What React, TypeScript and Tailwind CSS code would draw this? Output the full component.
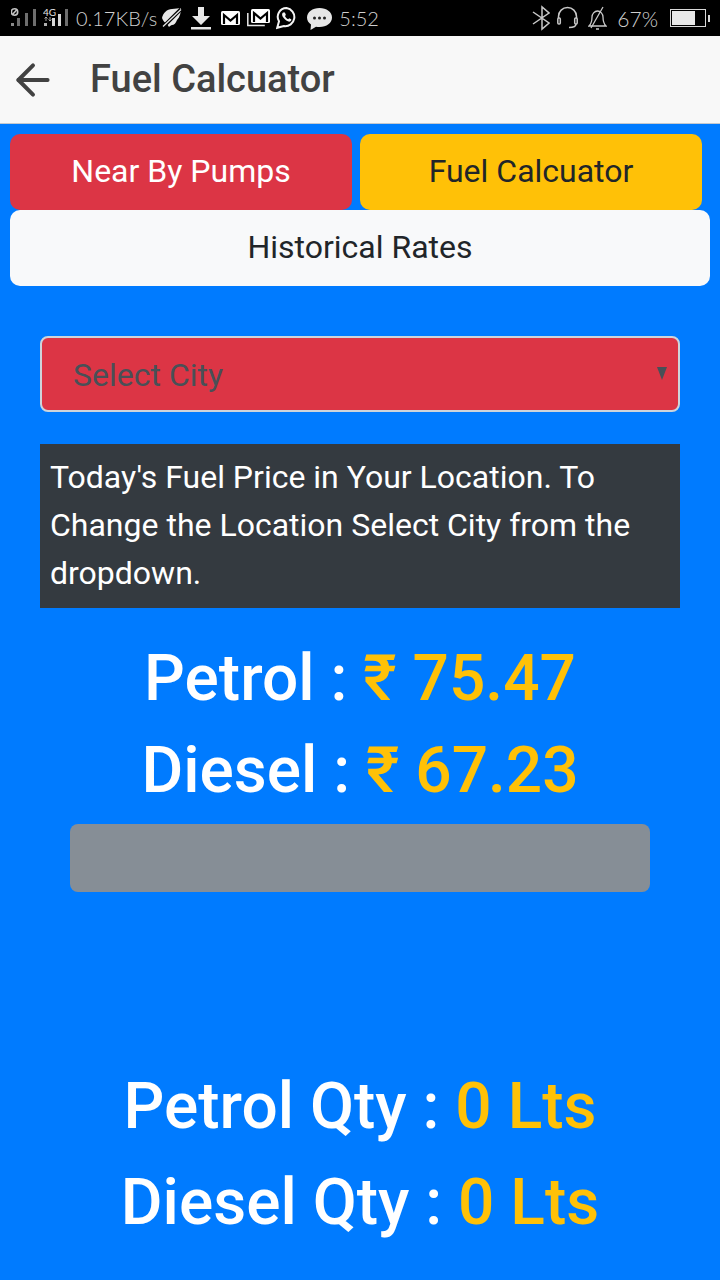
import { ArrowLeft } from "lucide-react";

// status bar icons use the bar's own y coordinates, so every svg is 36px tall
function SignalOff() {
  return (
    <svg width="25" height="36" viewBox="0 0 25 36" fill="none" className="ml-[11px]">
      <circle cx="3.500" cy="12" r="3.200" stroke="#c4c4c4" strokeWidth="1.600" />
      <path d="M1.500 14.500l4.500-5" stroke="#c4c4c4" strokeWidth="1.600" />
      <rect x="0" y="23" width="3" height="3" fill="#8a8a8a" />
      <rect x="6" y="18" width="3" height="8" fill="#6e6e6e" />
      <rect x="14" y="13" width="3" height="13" fill="#6e6e6e" />
      <rect x="22" y="9" width="3" height="17" fill="#6e6e6e" />
    </svg>
  );
}

function Signal4G() {
  return (
    <svg width="25" height="36" viewBox="0 0 25 36" fill="none" className="ml-[7px]">
      <text x="0" y="15.500" fontSize="10" fontWeight="400" fill="#e4e4e4" fontFamily="Lato, sans-serif">4G</text>
      <path d="M3 17v4M1.500 18.500L3 17l1.500 1.500M7 17v4M5.500 19.500L7 21l1.500-1.500" stroke="#b0b0b0" strokeWidth="0.900" />
      <rect x="1" y="23" width="3" height="3" fill="#b0b0b0" />
      <rect x="9" y="18" width="3" height="8" fill="#d8d8d8" />
      <rect x="15" y="14" width="3" height="12" fill="#d8d8d8" />
      <rect x="22" y="9" width="3" height="17" fill="#6e6e6e" />
    </svg>
  );
}

function StatusBar() {
  return (
    <div className="flex h-9 items-center justify-between bg-black pr-[10px] text-[#cfcfcf] font-['Lato',sans-serif] font-light">
      <div className="flex items-center">
        <SignalOff />
        <Signal4G />
        <span className="ml-[8px] text-[20px] leading-none">0.17KB/s</span>
        <svg width="21" height="36" viewBox="0 0 21 36" className="ml-[4px]">
          <path d="M1 18c1-5 5-9 10-9 3 0 7-1 9-1 0 4-1 9-4 12-1 3-3 5-5 5-1 0-2 1-3 2l-2-3c-2-1-4-3-5-6z" fill="#e8e8e8" />
          <path d="M3 26L20 9" stroke="#000" strokeWidth="3.800" />
          <path d="M2 26.500L20 9.500" stroke="#e8e8e8" strokeWidth="1.300" />
        </svg>
        <svg width="20" height="36" viewBox="0 0 20 36" fill="#e8e8e8" className="ml-[9px]">
          <path d="M7 7h6v9h6l-9 9-9-9h6z" />
          <rect x="0" y="27" width="20" height="2.500" />
        </svg>
        <svg width="19" height="36" viewBox="0 0 19 36" className="ml-[10px]">
          <rect x="0" y="11" width="19" height="14" rx="1.500" fill="#fff" />
          <path d="M3 24v-9l6.500 5.500L16 15v9" fill="none" stroke="#000" strokeWidth="2.200" />
        </svg>
        <svg width="23" height="36" viewBox="0 0 23 36" className="ml-[7px]">
          <path d="M.8 13v12.500h17" fill="none" stroke="#e8e8e8" strokeWidth="1.500" />
          <rect x="4" y="9" width="19" height="14" rx="1.500" fill="#fff" />
          <path d="M7 22v-9l6.500 5.500L20 13v9" fill="none" stroke="#000" strokeWidth="2.200" />
        </svg>
        <svg width="20" height="36" viewBox="0 0 20 36" className="ml-[6px]">
          <path d="M10.500 8a8.800 8.800 0 0 0-7.500 13.300L1.200 27.800l6.700-1.700A8.800 8.800 0 1 0 10.500 8z" fill="none" stroke="#f4f4f4" strokeWidth="2" />
          <path d="M7 12.500c-1.300 1-1.300 3 .5 5.300s4.500 4.300 6.500 3.800c1.300-.4 1.500-1.700 1.200-2.300l-2-1-1 1c-1.300-.5-2.700-1.900-3.200-3.200l.9-1-1-2.600z" fill="#f4f4f4" />
        </svg>
        <svg width="25" height="36" viewBox="0 0 25 36" className="ml-[11px]">
          <path d="M12.500 8C5.500 8 0 12 0 17.500c0 3 1.500 5.300 4 7l-.5 5.500 5.500-3.300c1.100.2 2.300.3 3.500.3 7 0 12.500-4 12.500-9.500S19.500 8 12.500 8z" fill="#e6e6e6" />
          <circle cx="7.500" cy="18" r="1.500" fill="#222" />
          <circle cx="12.500" cy="18" r="1.500" fill="#222" />
          <circle cx="17.500" cy="18" r="1.500" fill="#222" />
        </svg>
        <span className="ml-[7px] text-[20px] leading-none">5:52</span>
      </div>
      <div className="flex items-center">
        <svg width="18" height="36" viewBox="0 0 18 36" fill="none" stroke="#c8c8c8" strokeWidth="1.500">
          <path d="M1 12l16 11-7 6V7l7 6L1 24" />
        </svg>
        <svg width="21" height="36" viewBox="0 0 21 36" fill="none" stroke="#c8c8c8" strokeWidth="1.500" className="ml-[7px]">
          <path d="M1.500 18v-1.500a9 9 0 0 1 18 0V18" />
          <rect x="0.800" y="18" width="2.500" height="6" rx="1" />
          <rect x="17.700" y="18" width="2.500" height="6" rx="1" />
          <path d="M19 24c0 2.500-3.500 3.500-7 3.500" />
        </svg>
        <svg width="19" height="36" viewBox="0 0 19 36" fill="none" stroke="#c8c8c8" strokeWidth="1.300" className="ml-[10px]">
          <path d="M1 26c2.500-2.500 3-5 3-9 0-3 2.500-6 5.500-6s5.500 3 5.500 6c0 4 1 7 3 9z" />
          <path d="M8 29h3M3 28L15 7" />
        </svg>
        <span className="ml-[10px] text-[21px] leading-none">67%</span>
        <div className="ml-[12px] flex h-[18px] w-[36px] items-center border border-[#d8d8d8] p-[1px]">
          <div className="h-full w-[23px] bg-[#e8e8e8]" />
        </div>
        <div className="ml-[2px] h-[7px] w-[2px] bg-[#d8d8d8]" />
      </div>
    </div>
  );
}

function TabButton({ label, className }: { label: string; className: string }) {
  return (
    <div className={`flex h-[76px] items-center justify-center rounded-[10px] pb-[2px] text-[32px] ${className}`}>
      {label}
    </div>
  );
}

function PriceLine({ label, value }: { label: string; value: string }) {
  return (
    <div className="text-center text-[64px] font-medium leading-[92px] text-white">
      {label} : <span className="text-[#ffc107]">{value}</span>
    </div>
  );
}

export default function App() {
  return (
    <div className="flex h-[1280px] w-[720px] flex-col overflow-hidden bg-[#007bff] font-['Roboto',sans-serif]">
      <StatusBar />
      <header className="flex h-[88px] items-center border-b border-[#c4c9cf] bg-[#f8f8f8] pl-[8px] text-[#424242]">
        <ArrowLeft size={50} strokeWidth={1.9} />
        <h1 className="ml-[32px] pb-[2px] text-[38px] font-medium leading-none">Fuel Calcuator</h1>
      </header>

      <main className="flex flex-1 flex-col px-[10px] pt-[10px]">
        <div className="flex gap-[8px]">
          <TabButton label="Near By Pumps" className="w-[342px] bg-[#dc3545] text-white" />
          <TabButton label="Fuel Calcuator" className="w-[342px] bg-[#ffc107] text-[#212529]" />
        </div>
        <TabButton label="Historical Rates" className="bg-[#f8f9fa] text-[#212529]" />

        <div className="mx-[30px] mt-[50px] flex h-[76px] items-center justify-between rounded-[8px] border-2 border-[#ced4da] bg-[#dc3545] pl-[31px] pr-[11px] text-[#495057]">
          <span className="pt-[2px] text-[32px]">Select City</span>
          <svg width="10" height="13" viewBox="0 0 10 13" className="mb-[1px]">
            <path d="M0 0h10L5 13z" fill="#495057" />
          </svg>
        </div>

        <p className="mx-[30px] mt-[32px] bg-[#343a40] pb-[11px] pl-[10px] pr-[10px] pt-[9px] text-[32px] leading-[48px] text-white">
          Today's Fuel Price in Your Location. To Change the Location Select City from the dropdown.
        </p>

        <div className="mt-[25px]">
          <PriceLine label="Petrol" value="₹ 75.47" />
          <PriceLine label="Diesel" value="₹ 67.23" />
        </div>

        <div className="mx-[60px] mt-[7px] h-[68px] rounded-[8px] bg-[#868e96]" />

        <div className="mt-[167px]">
          <div className="text-center text-[64px] font-medium leading-[96px] text-white">
            Petrol Qty : <span className="text-[#ffc107]">0 Lts</span>
          </div>
          <div className="text-center text-[64px] font-medium leading-[96px] text-white">
            Diesel Qty : <span className="text-[#ffc107]">0 Lts</span>
          </div>
        </div>
      </main>
    </div>
  );
}
